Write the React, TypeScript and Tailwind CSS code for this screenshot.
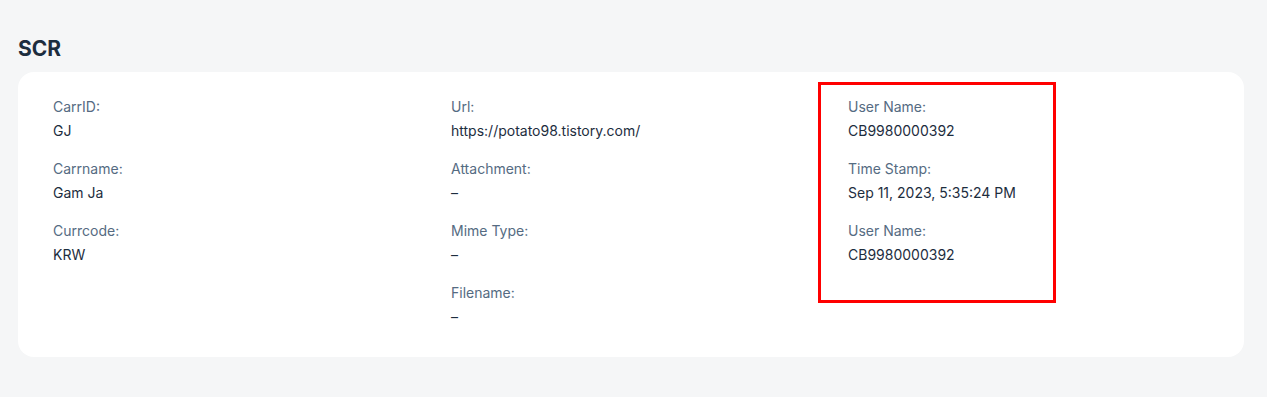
import React from "react";

type Field = { label: string; value: string };

const columns: Field[][] = [
  [
    { label: "CarrID:", value: "GJ" },
    { label: "Carrname:", value: "Gam Ja" },
    { label: "Currcode:", value: "KRW" },
  ],
  [
    { label: "Url:", value: "https://potato98.tistory.com/" },
    { label: "Attachment:", value: "–" },
    { label: "Mime Type:", value: "–" },
    { label: "Filename:", value: "–" },
  ],
  [
    { label: "User Name:", value: "CB9980000392" },
    { label: "Time Stamp:", value: "Sep 11, 2023, 5:35:24 PM" },
    { label: "User Name:", value: "CB9980000392" },
  ],
];

export default function App() {
  return (
    <div
      className="min-h-[397px] w-full bg-[#f5f6f7] pl-[18px] pr-[23px] pt-[36px]"
      style={{ fontFamily: "Inter, 'Liberation Sans', sans-serif" }}
    >
      <h2 className="text-[21px] font-bold leading-[25px] text-[#1d2d3e]">SCR</h2>
      <div className="relative mt-[11px] rounded-[16px] bg-white pl-[35px] pt-[26px] pb-[31px]">
        <div className="grid grid-cols-[398px_397px_1fr]">
          {columns.map((col, i) => (
            <div key={i} className="flex flex-col gap-[20px]">
              {col.map((f, j) => (
                <div key={j} className="flex flex-col gap-[6px] text-[14px] leading-[18px]">
                  <span className="text-[#556b82]">{f.label}</span>
                  <span className="text-[#1d2d3e]">{f.value}</span>
                </div>
              ))}
            </div>
          ))}
        </div>
        <div className="pointer-events-none absolute left-[800px] top-[10px] h-[221px] w-[238px] border-[3px] border-[#ff0000]" />
      </div>
    </div>
  );
}
